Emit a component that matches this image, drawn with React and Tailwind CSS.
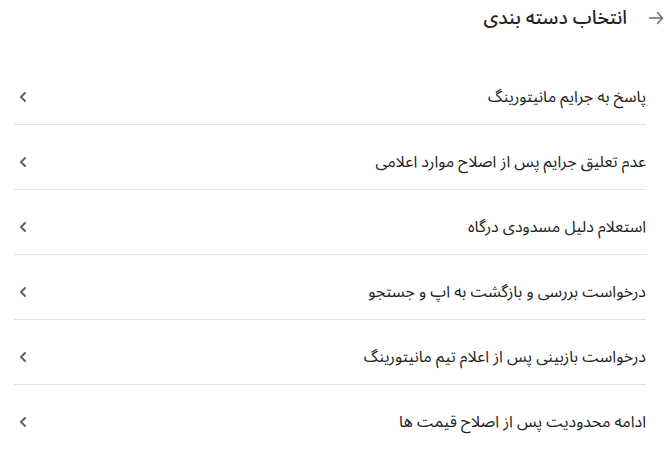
import React from "react";

const items = [
	"پاسخ به جرایم مانیتورینگ",
	"عدم تعلیق جرایم پس از اصلاح موارد اعلامی",
	"استعلام دلیل مسدودی درگاه",
	"درخواست بررسی و بازگشت به اپ و جستجو",
	"درخواست بازبینی پس از اعلام تیم مانیتورینگ",
	"ادامه محدودیت پس از اصلاح قیمت ها",
];

function Chevron() {
	return (
		<svg width="10" height="12" viewBox="0 0 10 12" fill="none">
			<path d="M7 2 L3 6 L7 10" stroke="#5f6070" strokeWidth="2" strokeLinecap="round" strokeLinejoin="round" />
		</svg>
	);
}

export default function App() {
	return (
		<div dir="rtl" className="bg-white w-[667px] h-[458px] overflow-hidden text-[#222]" style={{ fontFamily: '"Noto Sans Arabic", "Noto Sans", sans-serif' }}>
			<div className="flex items-center gap-[21px] pr-[3px] h-[36px]">
				<svg width="16" height="14" viewBox="0 0 16 14" fill="none">
					<path d="M1.5 7 H14.5 M9.5 1.5 L14.5 7 L9.5 12.5" stroke="#6b6b78" strokeWidth="1.5" strokeLinecap="round" strokeLinejoin="round" />
				</svg>
				<h1 className="text-[19px] leading-[36px] font-medium">انتخاب دسته بندی</h1>
			</div>
			<div className="mr-[21px] ml-[14px] mt-[24px]">
				{items.map((item, i) => (
					<div key={i} className={"flex items-center justify-between h-[65px] pt-[9px] " + (i < items.length - 1 ? "border-b border-[#e2e2e2]" : "")}>
						<span className="text-[16px]">{item}</span>
						<span className="ml-[4px]"><Chevron /></span>
					</div>
				))}
			</div>
		</div>
	);
}
